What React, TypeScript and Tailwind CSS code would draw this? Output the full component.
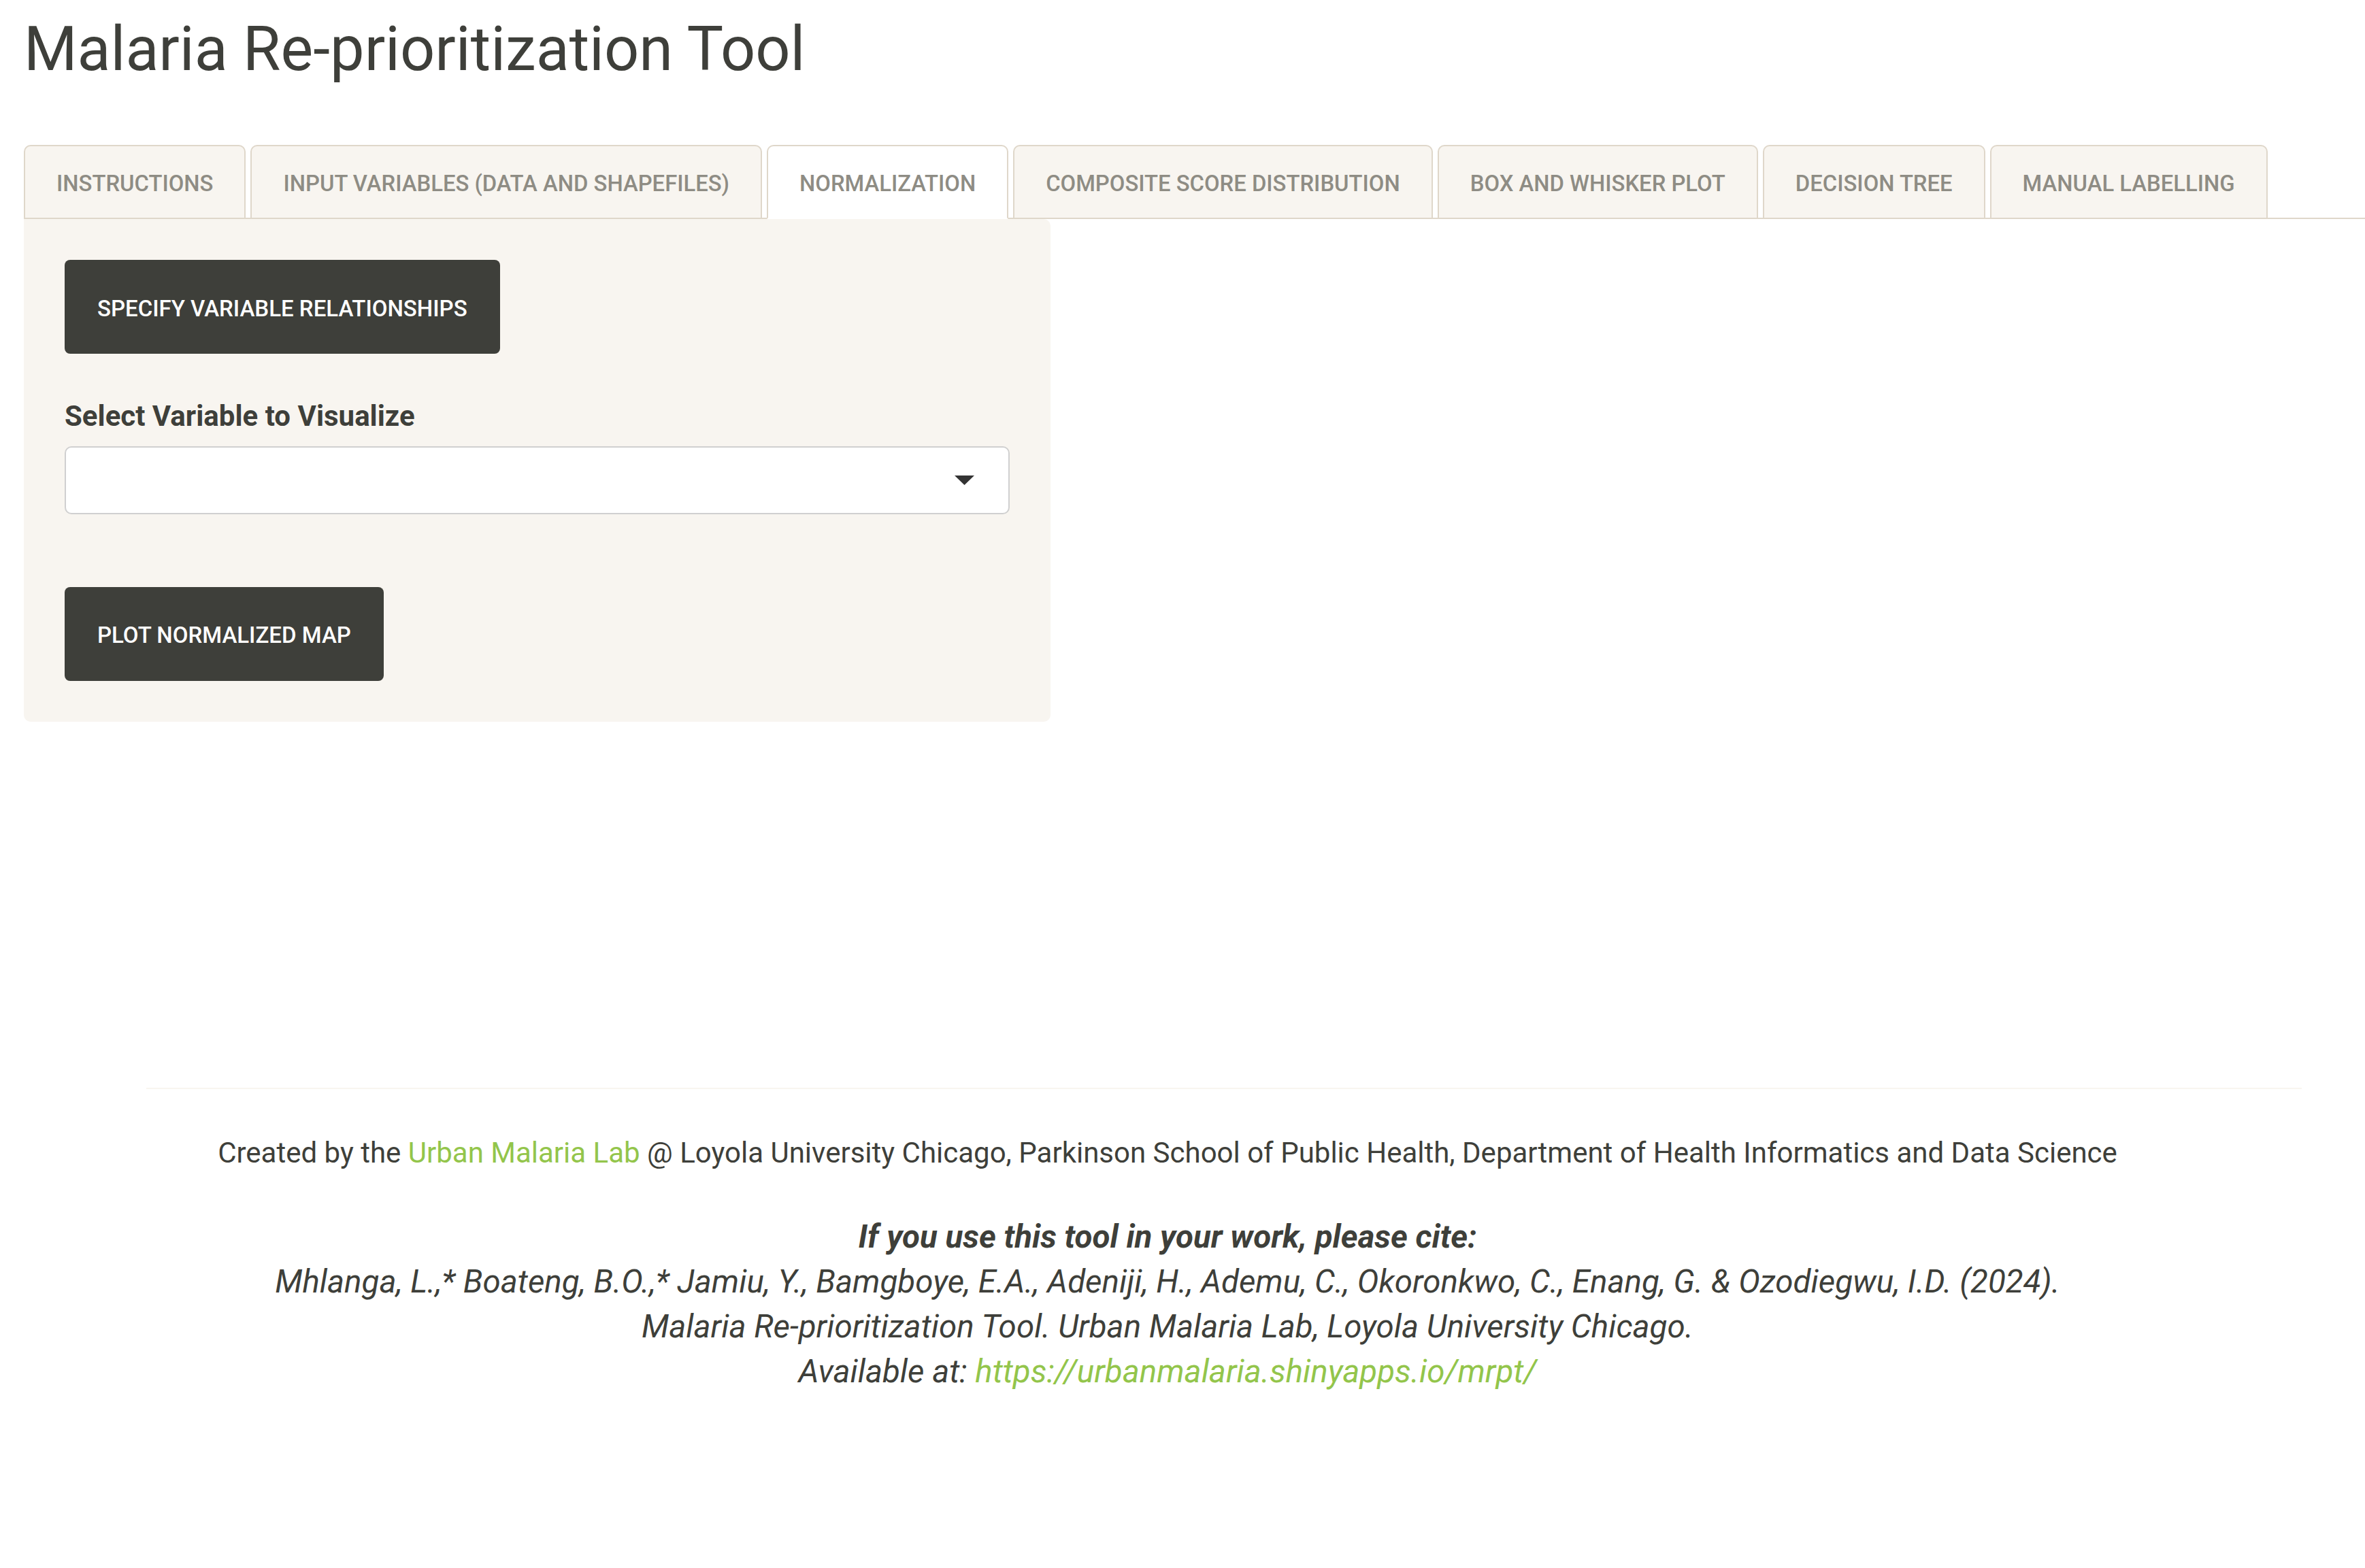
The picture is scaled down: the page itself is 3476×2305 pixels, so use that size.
import React from 'react'

const tabs = [
  'Instructions',
  'Input Variables (Data and Shapefiles)',
  'Normalization',
  'Composite Score Distribution',
  'Box and Whisker Plot',
  'Decision Tree',
  'Manual Labelling',
]

const active = 'Normalization'

export default function App() {
  return (
    <div className="min-h-screen bg-white font-['Roboto',sans-serif] text-[#3e3f3a]">
      <div className="pl-[35px]">
        <h2 className="pt-[19px] text-[90px] leading-[107px] font-normal">Malaria Re-prioritization Tool</h2>

        {/* Tabs */}
        <nav className="mt-[87px] flex gap-[7px] border-b-2 border-[#dfd7ca]">
          {tabs.map((t) => (
            <a
              key={t}
              href="#"
              className={`-mb-[2px] flex h-[109px] items-center rounded-t-[10px] border-2 px-[46px] pt-[6px] text-[32.8px] font-medium uppercase text-[#8e8c84] ${
                t === active
                  ? 'border-[#dfd7ca] border-b-white bg-white'
                  : 'border-[#dfd7ca] bg-[#f8f5f0]'
              }`}
            >
              {t}
            </a>
          ))}
        </nav>

        {/* Sidebar panel */}
        <div className="w-[1509px] rounded-b-[10px] rounded-tr-[10px] bg-[#f8f5f0] p-[60px]">
          <button className="flex h-[138px] items-center rounded-[8px] bg-[#3e3f3a] px-[48px] pt-[5px] text-[33px] font-medium uppercase text-white">
            Specify Variable Relationships
          </button>

          <label className="mt-[62px] block text-[42px] font-bold leading-[60px]">Select Variable to Visualize</label>
          <div className="mt-[14px] flex h-[100px] w-full items-center justify-end rounded-[10px] border-2 border-[#d0d0d0] bg-white pr-[50px]">
            <svg width="29" height="14" viewBox="0 0 29 14">
              <polygon points="0,0 29,0 14.5,14" fill="#333333" />
            </svg>
          </div>

          <button className="mt-[107px] flex h-[138px] items-center rounded-[8px] bg-[#3e3f3a] px-[48px] pt-[3px] text-[33px] font-medium uppercase text-white">
            Plot Normalized Map
          </button>
        </div>
      </div>

      {/* Footer */}
      <hr className="ml-[215px] mr-[93px] mt-[538px] border-0 border-t-2 border-[#f8f5f0]" />
      <div className="pl-[35px] pr-[79px] text-center">
        <p className="mt-[64px] text-[42px] leading-[60px]">
          Created by the <a href="#" className="text-[#93c54b]">Urban Malaria Lab</a> @ Loyola University Chicago, Parkinson
          School of Public Health, Department of Health Informatics and Data Science
        </p>
        <div className="mt-[60px] text-[47.5px] italic leading-[66px]">
          <p className="font-bold">If you use this tool in your work, please cite:</p>
          <p>
            Mhlanga, L.,* Boateng, B.O.,* Jamiu, Y., Bamgboye, E.A., Adeniji, H., Ademu, C., Okoronkwo, C., Enang, G. &amp;
            Ozodiegwu, I.D. (2024).
          </p>
          <p>Malaria Re-prioritization Tool. Urban Malaria Lab, Loyola University Chicago.</p>
          <p>
            Available at: <a href="#" className="text-[#93c54b]">https://urbanmalaria.shinyapps.io/mrpt/</a>
          </p>
        </div>
      </div>
    </div>
  )
}
